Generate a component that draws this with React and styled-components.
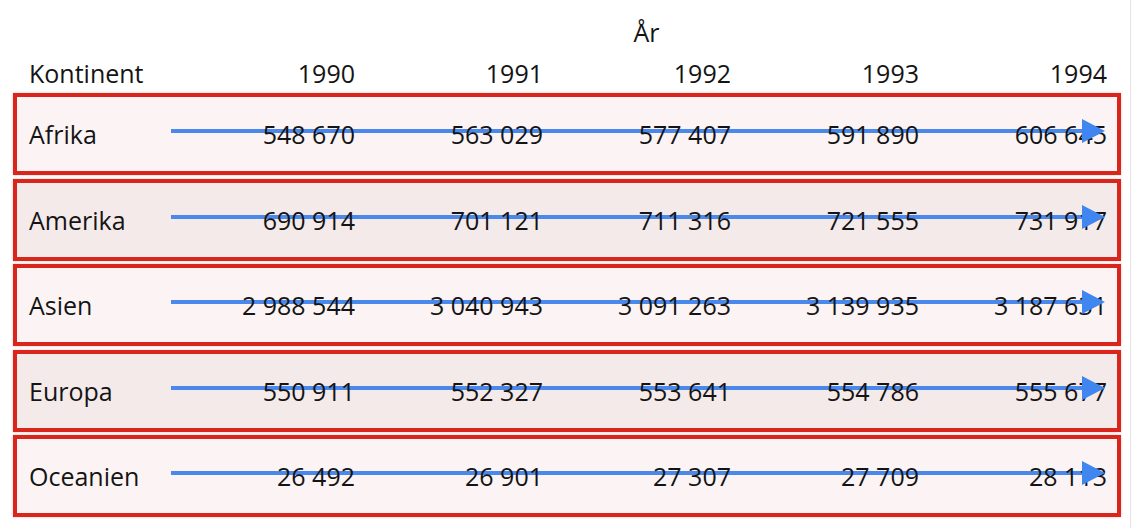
import React from "react";
import styled, { createGlobalStyle } from "styled-components";

const YEARS = [1990, 1991, 1992, 1993, 1994];

const ROWS = [
  { name: "Afrika", values: ["548 670", "563 029", "577 407", "591 890", "606 645"] },
  { name: "Amerika", values: ["690 914", "701 121", "711 316", "721 555", "731 917"] },
  { name: "Asien", values: ["2 988 544", "3 040 943", "3 091 263", "3 139 935", "3 187 631"] },
  { name: "Europa", values: ["550 911", "552 327", "553 641", "554 786", "555 677"] },
  { name: "Oceanien", values: ["26 492", "26 901", "27 307", "27 709", "28 113"] }
];

const GlobalStyle = createGlobalStyle`
  html, body {
    margin: 0;
    padding: 0;
    background: #ffffff;
  }
  body {
    font-family: "Open Sans", "Noto Sans", sans-serif;
    color: #141414;
  }
`;

const Page = styled.div`
  box-sizing: border-box;
  width: 1131px;
  height: 528px;
  padding: 15px 0 0 13px;
  border-right: 1px solid #e4e4e4;
  font-size: 25px;
`;

const Title = styled.div`
  height: 34px;
  line-height: 34px;
  padding-left: 150px;
  text-align: center;
`;

const Grid = styled.div`
  display: grid;
  grid-template-columns: 138px repeat(5, 188px);
  align-items: center;
`;

const HeaderRow = styled(Grid)`
  margin-top: 7px;
  height: 34px;
  line-height: 34px;
  padding-left: 16px;
`;

const List = styled.div`
  display: flex;
  flex-direction: column;
  gap: 3.5px;
  margin-top: 3px;
  width: 1108px;
`;

const Box = styled(Grid)`
  position: relative;
  box-sizing: border-box;
  height: 82px;
  padding: 0 10px 0 12px;
  border: 4px solid #d8261d;
  background: ${p => (p.$shade ? "#f5eaea" : "#fcf4f4")};
  box-shadow: 0 0 2px rgba(216, 38, 29, 0.35);
`;

const Label = styled.div`
  position: relative;
  z-index: 1;
`;

const Cell = styled.div`
  position: relative;
  z-index: 1;
  text-align: right;
  white-space: nowrap;
`;

const Line = styled.svg`
  position: absolute;
  left: 154px;
  top: 32px;
  z-index: 0;
`;

const Head = styled.svg`
  position: absolute;
  left: 1065px;
  top: 22px;
  z-index: 2;
`;

const Arrow = () => (
  <>
    <Line width="916" height="4" viewBox="0 0 916 4">
      <rect x="0" y="0" width="916" height="4" fill="#4a88ec" />
    </Line>
    <Head width="23" height="24" viewBox="0 0 23 24">
      <polygon points="0,0 23,12 0,24" fill="#3f86f0" />
    </Head>
  </>
);

const App = () => (
  <Page>
    <GlobalStyle />
    <Title>År</Title>
    <HeaderRow>
      <Label>Kontinent</Label>
      {YEARS.map(y => (
        <Cell key={y}>{y}</Cell>
      ))}
    </HeaderRow>
    <List>
      {ROWS.map((row, i) => (
        <Box key={row.name} $shade={i % 2 === 1}>
          <Arrow />
          <Label>{row.name}</Label>
          {row.values.map((v, j) => (
            <Cell key={j}>{v}</Cell>
          ))}
        </Box>
      ))}
    </List>
  </Page>
);

export default App;
